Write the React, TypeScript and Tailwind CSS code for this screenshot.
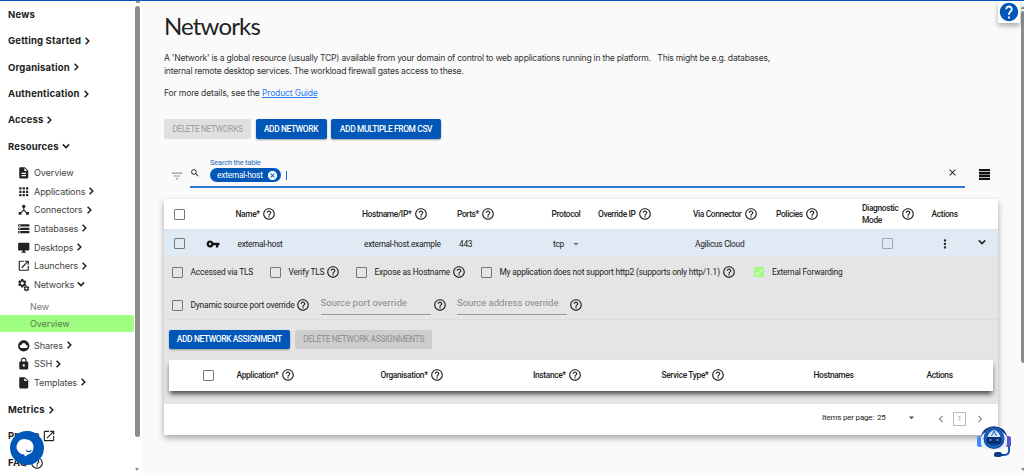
import type { ReactNode } from "react";
import type { IconType } from "react-icons";
import {
  MdApps, MdArrowDropDown, MdChevronLeft, MdChevronRight, MdClose, MdCancel, MdCloudCircle, MdDescription,
  MdDesktopWindows, MdDeviceHub, MdFilterList, MdHelp, MdHelpOutline, MdInsertDriveFile,
  MdLaunch, MdLock, MdMoreVert, MdSearch, MdSettings, MdStorage, MdCheck,
} from "react-icons/md";

function Help({ className = "" }: { className?: string }) {
  return <MdHelpOutline className={`size-[14px] shrink-0 text-[#222] ${className}`} />;
}

function Box({ className = "border-[#777]" }: { className?: string }) {
  return <span className={`block size-[11px] shrink-0 rounded-[1px] border ${className}`} />;
}

function Chevron({ open = false }: { open?: boolean }) {
  return (
    <svg viewBox="0 0 10 10" className="-mt-px ml-[3px] size-[8px] shrink-0 fill-none stroke-[#222] stroke-[1.9]">
      <path d={open ? "M1 3l4 4 4-4" : "M2 1l4 4-4 4"} />
    </svg>
  );
}

function Key() {
  return (
    <svg viewBox="0 0 24 24" className="mr-[17.5px] size-[14px] shrink-0 fill-[#111]">
      <path d="M12.650 10C11.830 7.670 9.610 6 7 6c-3.310 0-6 2.690-6 6s2.690 6 6 6c2.610 0 4.830-1.670 5.650-4H17v4h4v-4h2v-4H12.650zM7 14c-1.100 0-2-.9-2-2s.9-2 2-2 2 .9 2 2-.9 2-2 2z" />
    </svg>
  );
}

function Gears() {
  return (
    <span className="relative block size-[13.5px] shrink-0">
      <MdSettings className="absolute top-0 left-0 size-[10.5px]" />
      <MdSettings className="absolute right-0 bottom-0 size-[7px]" />
    </span>
  );
}

function Section({ label, children }: { label: string; children?: ReactNode }) {
  return (
    <div className="flex h-[26.35px] items-center pl-2 text-[#222]">
      <span className="text-[9.5px] font-bold tracking-[0.18px]">{label}</span>
      {children}
    </div>
  );
}

type Sub = { label: string; icon?: IconType; open?: boolean; leaf?: boolean };

function SubItem({ label, icon: Icon, open, leaf }: Sub) {
  return (
    <div className="flex h-[18.7px] items-center pl-[16.5px] text-[#222]">
      {Icon ? <Icon className="size-[13.5px] shrink-0" /> : <Gears />}
      <span className="ml-[4px] text-[9.1px] tracking-[-0.14px] text-[#444]">{label}</span>
      {!leaf && <Chevron open={open} />}
    </div>
  );
}

const resources: Sub[] = [
  { label: "Overview", icon: MdDescription, leaf: true },
  { label: "Applications", icon: MdApps },
  { label: "Connectors", icon: MdDeviceHub },
  { label: "Databases", icon: MdStorage },
  { label: "Desktops", icon: MdDesktopWindows },
  { label: "Launchers", icon: MdLaunch },
  { label: "Networks", open: true },
];

const moreResources: Sub[] = [
  { label: "Shares", icon: MdCloudCircle },
  { label: "SSH", icon: MdLock },
  { label: "Templates", icon: MdInsertDriveFile },
];

function Sidebar() {
  return (
    <aside className="relative flex h-full w-[142px] shrink-0 bg-white font-['Inter',sans-serif]">
      <div className="w-[134px] pt-[1px]">
        <Section label="News" />
        <Section label="Getting Started"><Chevron /></Section>
        <Section label="Organisation"><Chevron /></Section>
        <Section label="Authentication"><Chevron /></Section>
        <Section label="Access"><Chevron /></Section>
        <Section label="Resources"><Chevron open /></Section>
        <div className="mt-[3.3px] mb-[4.7px]">
          {resources.map((r) => <SubItem key={r.label} {...r} />)}
        </div>
        <div className="flex h-[16.5px] items-center pl-[30px] text-[9px] text-[#777]">New</div>
        <div className="flex h-[16.5px] w-[133.5px] items-center rounded-r-[2px] bg-[#a0ff82] pl-[30px] text-[9px] tracking-[-0.1px] text-[#557a4c]">Overview</div>
        <div className="mt-[4.3px] mb-[4.7px]">
          {moreResources.map((r) => <SubItem key={r.label} {...r} />)}
        </div>
        <div>
          <Section label="Metrics"><Chevron /></Section>
          <Section label="Profile"><MdLaunch className="ml-[2px] size-[14px]" /></Section>
          <Section label="FAQ"><Help className="ml-[3px]" /></Section>
        </div>
      </div>
      <div className="relative w-[7px]">
        <div className="absolute top-[5px] left-[1px] h-[431px] w-[5px] rounded-full bg-[#8b8b8b]" />
        <div className="absolute top-0 left-[2px] h-[2px] w-[4px] bg-[#999]" />
        <div className="absolute top-[467px] left-[1px] border-x-[2.5px] border-t-[3px] border-x-transparent border-t-[#888]" />
      </div>
      <div className="absolute top-[430px] left-[10px] flex size-[34px] items-center justify-center rounded-full bg-[#0058b8]">
        <svg viewBox="0 0 34 34" className="size-[34px]">
          <path d="M17 8.500a7.800 7.800 0 1 0-2.700 15.100L14.800 25.500l3.400-1.900A7.800 7.800 0 0 0 17 8.500z" fill="#fff" />
          <path d="M16 19.500q2.800 2.200 5.500 0" fill="none" stroke="#0058b8" strokeWidth="1.300" />
        </svg>
      </div>
    </aside>
  );
}

function Button({ children, className = "", disabled = false }: { children: string; className?: string; disabled?: boolean }) {
  const tone = disabled ? "bg-black/10 text-black/28" : "bg-[#0057b8] text-white shadow-[0_1px_2px_rgba(0,0,0,.35)]";
  return (
    <button className={`flex h-[19.5px] shrink-0 items-center justify-center rounded-[2px] text-[8.4px] font-medium tracking-[-0.37px] whitespace-nowrap ${tone} ${className}`}>
      {children}
    </button>
  );
}

function Th({ children, className = "", help = true }: { children: ReactNode; className?: string; help?: boolean }) {
  return (
    <div className={`flex shrink-0 items-center gap-[2.5px] tracking-[-0.35px] whitespace-nowrap ${className}`}>
      <span>{children}</span>
      {help && <Help />}
    </div>
  );
}

function Option({ label, className = "", help = false }: { label: string; className?: string; help?: boolean }) {
  return (
    <div className={`flex shrink-0 items-center whitespace-nowrap ${className}`}>
      <Box />
      <span className="ml-[7.5px]">{label}</span>
      {help && <Help className="ml-[2px]" />}
    </div>
  );
}

function Bot() {
  return (
    <svg viewBox="0 0 36 36" className="size-[36px]">
      <path d="M6 13C8 0 28 0 30 13" fill="none" stroke="#0b3c82" strokeWidth="2.200" />
      <rect x="1" y="12" width="6" height="11" rx="2.500" fill="#3f8df5" />
      <rect x="29" y="12" width="6" height="11" rx="2.500" fill="#5856d0" />
      <path d="M5 14C6 4 30 4 31 14V20C31 28 5 28 5 20z" fill="#e4eefb" />
      <circle cx="18" cy="14.500" r="10.500" fill="#0b4aa0" />
      <circle cx="18" cy="14.500" r="8.500" fill="none" stroke="#2f7de0" strokeWidth="1" />
      <path d="M11.500 13q1-5 6.500-7 5.500 2 6.500 7z" fill="#d4e8ff" />
      <path d="M15.500 12l2.500-5 2.500 5" fill="none" stroke="#0b4aa0" strokeWidth=".9" />
      <rect x="10.500" y="13" width="15" height="7" rx="3" fill="#092f6d" />
      <circle cx="14.500" cy="16" r="1.100" fill="#5aa2ff" />
      <circle cx="21.500" cy="16" r="1.100" fill="#5aa2ff" />
      <path d="M33 22v5q0 4-5 4h-4" fill="none" stroke="#0b4fae" strokeWidth="1.800" />
      <rect x="18" y="28" width="8" height="5" rx="2.500" fill="#0b3c82" />
    </svg>
  );
}

export default function App() {
  return (
    <div className="relative flex h-[475px] w-[1024px] flex-col overflow-hidden bg-[#fafafa] font-['Roboto',sans-serif] text-[#222]">
      <div className="h-[1px] shrink-0 bg-[#0057b8]" />
      <div className="flex min-h-0 flex-1">
        <Sidebar />
        <main className="w-[878px] shrink-0 pl-[22px]">
          <h1 className="mt-[9px] h-[33px] font-['Lato',sans-serif] text-[24px] leading-[32px] tracking-[-0.85px]">Networks</h1>
          <div className="mt-[9px] font-['Inter',sans-serif] text-[8.6px] leading-[13.3px] tracking-[-0.245px] whitespace-pre text-[#333]">
            <p>A 'Network' is a global resource (usually TCP) available from your domain of control to web applications running in the platform.   This might be e.g. databases,</p>
            <p>internal remote desktop services. The workload firewall gates access to these.</p>
            <p className="mt-[8px] tracking-[-0.18px]">For more details, see the <a className="text-[#2a7cf7] underline">Product Guide</a></p>
          </div>
          <div className="mt-[19.6px] flex gap-[4.5px]">
            <Button disabled className="w-[87px]">DELETE NETWORKS</Button>
            <Button className="w-[71px]">ADD NETWORK</Button>
            <Button className="w-[110px]">ADD MULTIPLE FROM CSV</Button>
          </div>
          <div className="mt-[18px] flex h-[31px]">
            <MdFilterList className="mt-[12px] ml-[6px] size-[14px] text-[#999]" />
            <div className="ml-[6px] flex w-[775px] border-b-2 border-[#3078cf]">
              <MdSearch className="mt-[11px] size-[10px]" />
              <div className="ml-[10px] flex-1">
                <div className="pt-[1px] text-[7.6px] leading-[10px] tracking-[-0.25px] text-[#2a6cc0]">Search the table</div>
                <div className="flex items-center">
                  <span className="flex h-[14.5px] w-[71px] items-center rounded-full bg-[#0057b8] pl-[7px] text-[8.4px] tracking-[-0.22px] whitespace-nowrap text-white">
                    external-host
                    <MdCancel className="ml-[4px] size-[11px] shrink-0" />
                  </span>
                  <span className="ml-[5px] h-[9px] w-px bg-[#1565c8]" />
                </div>
              </div>
              <MdClose className="mt-[10.5px] mr-[7px] size-[11px]" />
            </div>
            <svg viewBox="0 0 11 11" className="mt-[12px] ml-[14px] size-[11px] fill-[#111]">
              <path d="M0 0h11v2.300H0zM0 2.900h11v2.300H0zM0 5.800h11v2.300H0zM0 8.700h11v2.300H0z" />
            </svg>
          </div>
          <section className="mt-[11.4px] w-[834px] bg-white text-[8.4px] tracking-[-0.28px] shadow-[0_3px_6px_rgba(0,0,0,.35)]">
            <div className="flex h-[31px] items-center border-b border-[#e0e0e0] font-medium">
              <div className="w-[71.5px] shrink-0 pl-[10px]"><Box /></div>
              <Th className="w-[126.5px]">Name*</Th>
              <Th className="w-[95px]">Hostname/IP*</Th>
              <Th className="w-[94.5px]">Ports*</Th>
              <Th className="w-[46.5px]" help={false}>Protocol</Th>
              <Th className="w-[95px]">Override IP</Th>
              <Th className="w-[83px]">Via Connector</Th>
              <Th className="w-[86px]">Policies</Th>
              <Th className="w-[69.5px] leading-[12px]">Diagnostic<br />Mode</Th>
              <Th help={false}>Actions</Th>
            </div>
            <div className="flex h-[27px] items-center bg-[#e0eaf5] whitespace-nowrap">
              <div className="w-[42px] shrink-0 pl-[10px]"><Box /></div>
              <Key />
              <span className="w-[126.5px]">external-host</span>
              <span className="w-[95px]">external-host.example</span>
              <span className="w-[94px]">443</span>
              <span className="w-[17px]">tcp</span>
              <MdArrowDropDown className="mr-[113px] size-[12px] text-[#666]" />
              <span className="w-[187px]">Agilicus Cloud</span>
              <Box className="border-[#9ca6b0]" />
              <MdMoreVert className="ml-[44.5px] size-[14px]" />
              <span className="-mt-[2px] ml-[23px]"><Chevron open /></span>
            </div>
            <div className="h-[146.5px] bg-[#e5e5e5]">
              <div className="h-[63px] border-b border-[#dcdcdc] pt-[5px] pl-[8px] tracking-[-0.19px]">
                <div className="flex h-[20px] items-center">
                  <Option className="w-[98px]" label="Accessed via TLS" />
                  <Option className="w-[86px]" label="Verify TLS" help />
                  <Option className="w-[125px]" label="Expose as Hostname" help />
                  <Option className="w-[273px]" label="My application does not support http2 (supports only http/1.1)" help />
                  <span className="flex size-[10px] items-center bg-[#a0ff82]"><MdCheck className="size-[10px] text-white" /></span>
                  <span className="ml-[8px] whitespace-nowrap">External Forwarding</span>
                </div>
                <div className="mt-[11px] flex h-[24px] items-center">
                  <Option className="w-[148.5px]" label="Dynamic source port override" help />
                  <div className="h-[20px] w-[110px] border-b border-[#999] pt-[1px] text-[9.6px] tracking-[0px] text-[#888]">Source port override</div>
                  <Help className="ml-[2px]" />
                  <div className="ml-[10.5px] h-[20px] w-[110px] border-b border-[#999] pt-[1px] text-[9.6px] tracking-[-0.07px] text-[#888]">Source address override</div>
                  <Help className="ml-[2px]" />
                </div>
              </div>
              <div className="flex gap-[5px] pt-[9.6px] pl-[4.5px]">
                <Button className="w-[121.5px]">ADD NETWORK ASSIGNMENT</Button>
                <Button disabled className="w-[137px]">DELETE NETWORK ASSIGNMENTS</Button>
              </div>
              <div className="overflow-hidden pt-[10.4px] pb-[13px]">
                <div className="ml-[4.5px] flex h-[31px] w-[824.5px] items-center bg-white font-medium shadow-[0_4px_5px_-1px_rgba(0,0,0,.7)]">
                  <div className="w-[68px] shrink-0 pl-[34px]"><Box /></div>
                  <Th className="w-[144px]">Application*</Th>
                  <Th className="w-[152.5px]">Organisation*</Th>
                  <Th className="w-[128.5px]">Instance*</Th>
                  <Th className="w-[152px]">Service Type*</Th>
                  <Th className="w-[113px]" help={false}>Hostnames</Th>
                  <Th help={false}>Actions</Th>
                </div>
              </div>
            </div>
            <div className="flex h-[31px] items-center text-[8px] tracking-[-0.2px] whitespace-nowrap">
              <span className="-mt-[3px] ml-[658px] w-[55px] shrink-0">Items per page:</span>
              <span className="-mt-[3px] w-[28px]">25</span>
              <MdArrowDropDown className="-mt-[3px] size-[13px] text-[#555]" />
              <MdChevronLeft className="ml-[16px] size-[14px] text-[#888]" />
              <span className="ml-[5px] flex h-[14px] w-[13px] items-center justify-center border border-[#bbb] text-[#aaa]">1</span>
              <MdChevronRight className="ml-[7px] size-[14px] text-[#888]" />
            </div>
          </section>
        </main>
        <div className="relative flex-1 bg-[#fafafa]">
          <div className="absolute top-[10px] left-[1px] h-[352px] w-[6px] rounded-full bg-[#8b8b8b]" />
          <div className="absolute top-[5px] left-[1px] border-x-[2.5px] border-b-[3px] border-x-transparent border-b-[#888]" />
          <div className="absolute top-[467px] left-[1px] border-x-[2.5px] border-t-[3px] border-x-transparent border-t-[#888]" />
        </div>
      </div>
      <div className="absolute top-[1px] left-[998px] flex h-[22px] w-[22px] items-center justify-center bg-white shadow-[0_3px_5px_rgba(0,0,0,.3)]">
        <MdHelp className="size-[22px] shrink-0 text-[#0057b8]" />
      </div>
      <div className="absolute top-[424px] left-[976px]"><Bot /></div>
    </div>
  );
}
